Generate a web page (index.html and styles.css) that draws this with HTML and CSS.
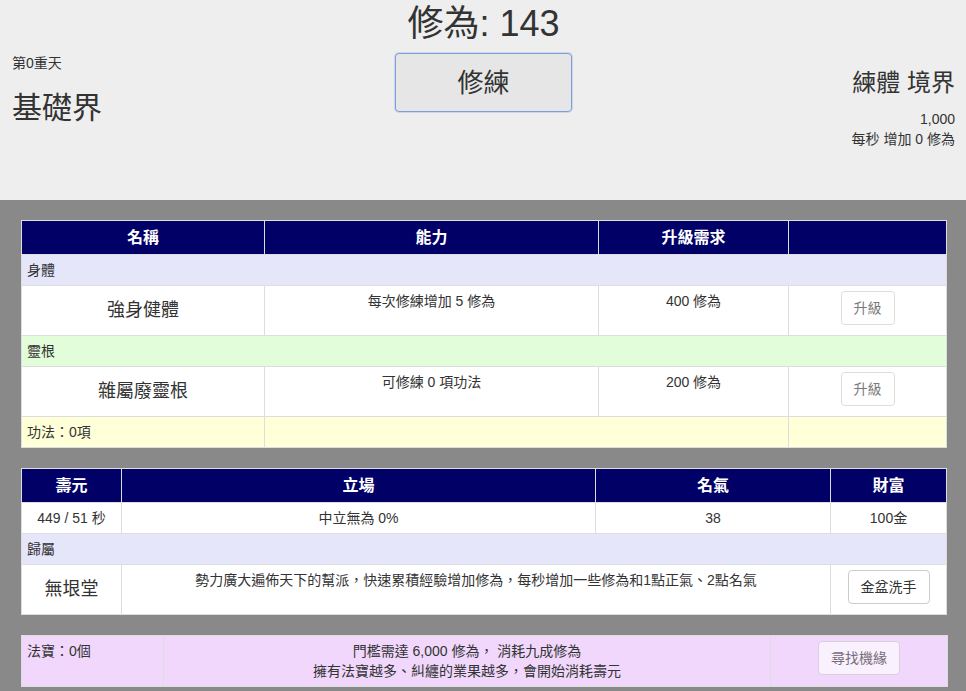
FILE: index.html
```html
<!DOCTYPE html>
<html lang="zh-Hant">
<head>
<meta charset="utf-8">
<title>修仙</title>
<link rel="stylesheet" href="styles.css">
</head>
<body>
<header class="top">
  <div class="realm">
    <div class="tier">第0重天</div>
    <div class="realm-name">基礎界</div>
  </div>
  <div class="center">
    <div class="xiuwei">修為: 143</div>
    <button class="train">修練</button>
  </div>
  <div class="stats">
    <div class="stage">練體 境界</div>
    <div class="cap">1,000</div>
    <div class="rate">每秒 增加 0 修為</div>
  </div>
</header>

<main class="board">
  <table class="grid">
    <colgroup>
      <col class="w243"><col class="w334"><col class="w190"><col class="w158">
    </colgroup>
    <thead>
      <tr><th>名稱</th><th>能力</th><th>升級需求</th><th></th></tr>
    </thead>
    <tbody>
      <tr class="sec-body"><td colspan="4">身體</td></tr>
      <tr>
        <td><h4 class="name">強身健體</h4></td>
        <td class="c">每次修練增加 5 修為</td>
        <td class="c">400 修為</td>
        <td class="c"><button class="btn disabled">升級</button></td>
      </tr>
      <tr class="sec-root"><td colspan="4">靈根</td></tr>
      <tr>
        <td><h4 class="name">雜屬廢靈根</h4></td>
        <td class="c">可修練 0 項功法</td>
        <td class="c">200 修為</td>
        <td class="c"><button class="btn disabled">升級</button></td>
      </tr>
      <tr class="sec-skill"><td>功法：0項</td><td colspan="2"></td><td></td></tr>
    </tbody>
  </table>

  <table class="grid">
    <colgroup>
      <col class="w100"><col class="w474"><col class="w235"><col class="w116">
    </colgroup>
    <thead>
      <tr><th>壽元</th><th>立場</th><th>名氣</th><th>財富</th></tr>
    </thead>
    <tbody>
      <tr>
        <td class="c">449 / 51 秒</td>
        <td class="c">中立無為 0%</td>
        <td class="c">38</td>
        <td class="c">100金</td>
      </tr>
      <tr class="sec-body"><td colspan="4">歸屬</td></tr>
      <tr>
        <td><h4 class="name">無垠堂</h4></td>
        <td class="c" colspan="2">勢力廣大遍佈天下的幫派，快速累積經驗增加修為，每秒增加一些修為和1點正氣、2點名氣</td>
        <td class="c"><button class="btn">金盆洗手</button></td>
      </tr>
    </tbody>
  </table>

  <table class="grid treasure">
    <colgroup>
      <col class="w142"><col class="w607"><col class="w177">
    </colgroup>
    <tbody>
      <tr>
        <td>法寶：0個</td>
        <td class="c">門檻需達 6,000 修為， 消耗九成修為<br>擁有法寶越多、糾纏的業果越多，會開始消耗壽元</td>
        <td class="c"><button class="btn disabled">尋找機緣</button></td>
      </tr>
    </tbody>
  </table>
</main>
</body>
</html>
```

FILE: styles.css
```css
html, body {
  margin: 0;
  padding: 0;
}
body {
  background: #898989;
  color: #333;
  font-family: "Liberation Sans", "Noto Sans CJK TC", sans-serif;
  font-size: 14px;
  line-height: 20px;
  min-height: 691px;
}

/* ---------- top area ---------- */
.top {
  background: #eeeeee;
  height: 200px;
  display: flex;
  align-items: flex-start;
  padding: 0 11px 0 12px;
  box-sizing: border-box;
}
.realm, .stats {
  flex: 1;
}
.tier {
  margin-top: 54px;
  font-size: 14px;
  line-height: 18px;
}
.realm-name {
  margin-top: 18px;
  font-size: 30px;
  line-height: 36px;
}
.center {
  display: flex;
  flex-direction: column;
  align-items: center;
}
.xiuwei {
  font-size: 36px;
  line-height: 47px;
}
.train {
  margin-top: 6px;
  width: 177px;
  height: 59px;
  background: #e6e6e6;
  border: 1px solid #7f9edb;
  box-shadow: 0 0 0 1px rgba(127, 158, 219, 0.3);
  border-radius: 4px;
  color: #333;
  font-family: "Liberation Sans", "Noto Sans CJK TC", sans-serif;
  font-size: 26px;
  line-height: 30px;
  padding: 0;
}
.stats {
  text-align: right;
}
.stage {
  margin-top: 68px;
  font-size: 24px;
  line-height: 30px;
}
.cap {
  margin-top: 11px;
  font-size: 14px;
  line-height: 20px;
}
.rate {
  font-size: 14px;
  line-height: 20px;
}

/* ---------- tables ---------- */
.board {
  padding: 20px 19px 1px 21px;
}
.grid {
  width: 926px;
  table-layout: fixed;
  border-collapse: collapse;
  background: #fff;
  margin-bottom: 20px;
}
.grid th,
.grid td {
  border: 1px solid #dddddd;
  padding: 5px;
  vertical-align: top;
}
.grid th {
  background: #000066;
  color: #fff;
  font-size: 16px;
  font-weight: bold;
  line-height: 23px;
  text-align: center;
}
.grid td {
  text-align: left;
}
.grid td.c {
  text-align: center;
}
.name {
  margin: 10px 0;
  font-size: 18px;
  line-height: 19px;
  font-weight: normal;
  text-align: center;
}
.sec-body td { background: #e6e6fb; }
.sec-root td { background: #e2fdd9; }
.sec-skill td { background: #ffffd8; }
.treasure td { background: #f0d7fb; }

.w243 { width: 243px; }
.w334 { width: 334px; }
.w190 { width: 190px; }
.w158 { width: 158px; }
.w100 { width: 100px; }
.w474 { width: 474px; }
.w235 { width: 235px; }
.w116 { width: 116px; }
.w142 { width: 142px; }
.w607 { width: 607px; }
.w177 { width: 177px; }

.btn {
  display: inline-block;
  font-family: "Liberation Sans", "Noto Sans CJK TC", sans-serif;
  font-size: 14px;
  line-height: 20px;
  padding: 6px 12px;
  border: 1px solid #cccccc;
  border-radius: 4px;
  background: #fff;
  color: #333;
}
.btn.disabled {
  opacity: 0.65;
}
```
